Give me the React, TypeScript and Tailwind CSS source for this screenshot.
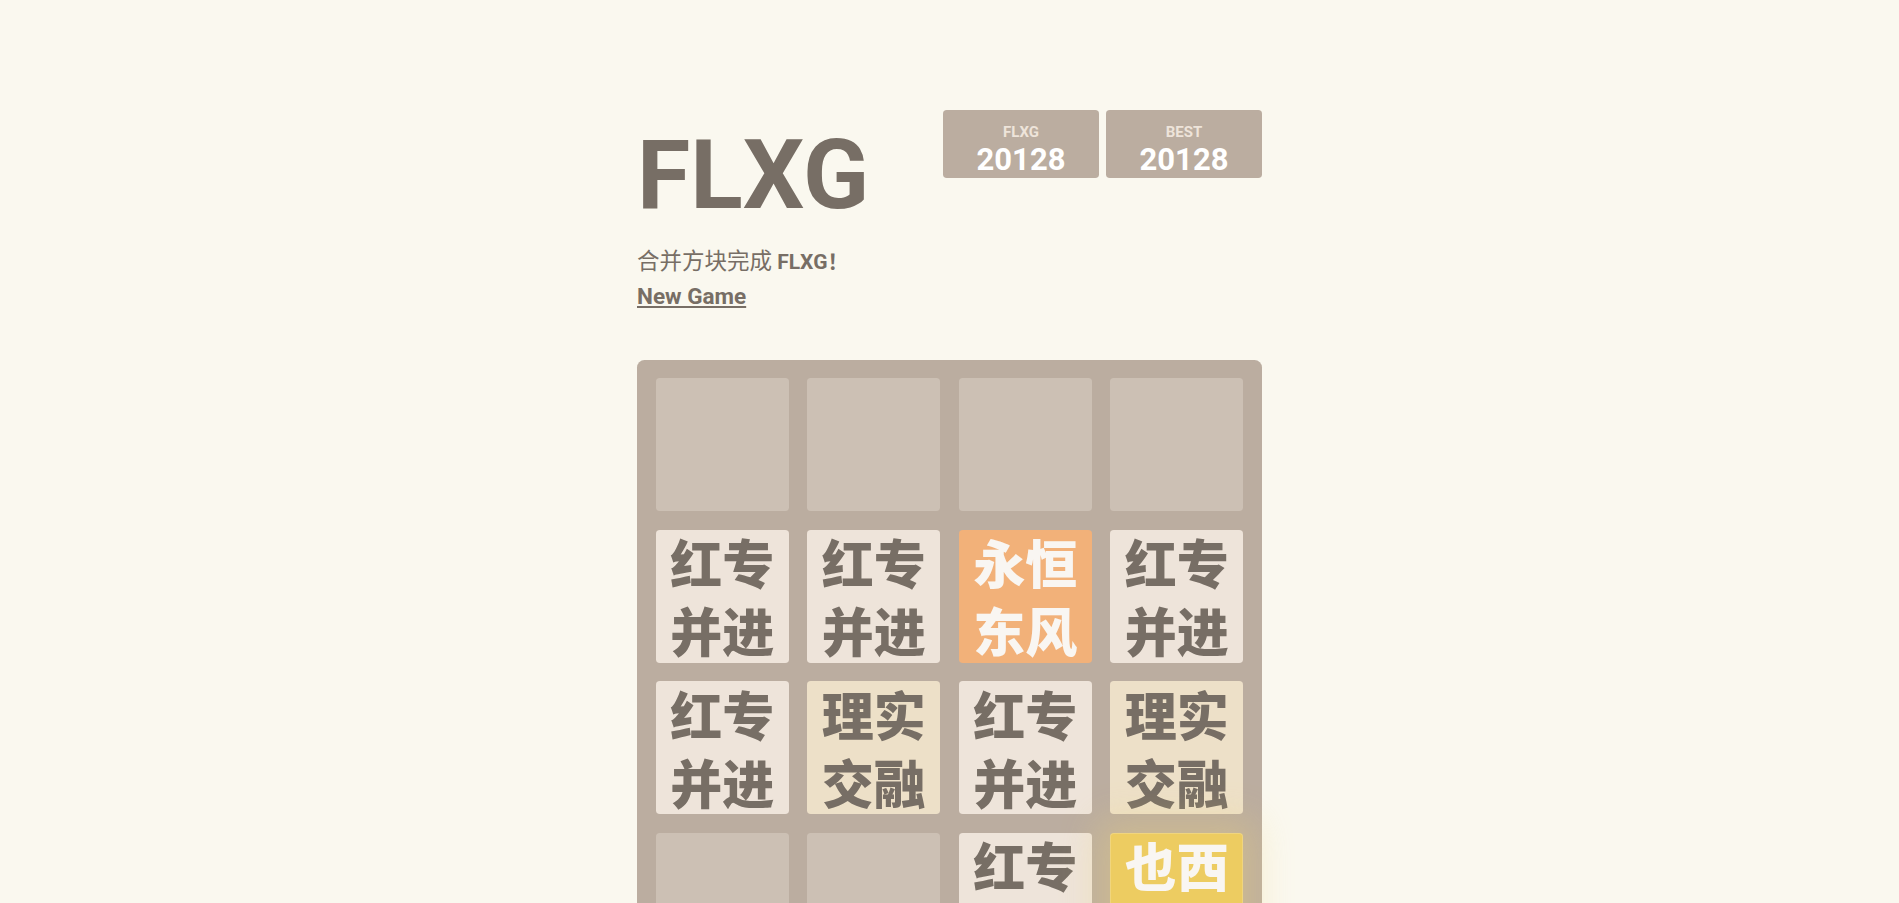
import React from "react";

type Tile = { text: string; kind: "empty" | "red" | "li" | "yong" | "ye" };

const rows: Tile[][] = [
  [
    { text: "", kind: "empty" },
    { text: "", kind: "empty" },
    { text: "", kind: "empty" },
    { text: "", kind: "empty" },
  ],
  [
    { text: "红专并进", kind: "red" },
    { text: "红专并进", kind: "red" },
    { text: "永恒东风", kind: "yong" },
    { text: "红专并进", kind: "red" },
  ],
  [
    { text: "红专并进", kind: "red" },
    { text: "理实交融", kind: "li" },
    { text: "红专并进", kind: "red" },
    { text: "理实交融", kind: "li" },
  ],
  [
    { text: "", kind: "empty" },
    { text: "", kind: "empty" },
    { text: "红专并进", kind: "red" },
    { text: "也西湖", kind: "ye" },
  ],
];

const tileClass: Record<Tile["kind"], string> = {
  empty: "bg-[rgba(238,228,218,0.35)]",
  red: "bg-[#eee4da] text-[#776e65]",
  li: "bg-[#ede0c8] text-[#776e65]",
  yong: "bg-[#f2b179] text-[#f9f6f2]",
  ye: "bg-[#edcc61] text-[#f9f6f2] shadow-[0_0_37.5px_12.5px_rgba(243,215,116,0.32),inset_0_0_0_1px_rgba(255,255,255,0.19)]",
};

const ScoreBox = ({ label, value }: { label: string; value: number }) => (
  <div className="flex flex-col items-center w-[156px] h-[68px] pt-[14px] bg-[#bbada0] rounded-[3.75px]">
    <span className="text-[15px] leading-[16px] font-bold uppercase text-[#eee4da]">{label}</span>
    <span className="mt-[1.5px] text-[31px] leading-[36px] font-bold text-white">{value}</span>
  </div>
);

const App = () => {
  return (
    <div className="min-h-screen bg-[#faf8ef] text-[#776e65] font-['Roboto','Noto_Sans_CJK_SC',sans-serif] pt-[100px] pb-[100px]">
      <div className="w-[625px] mx-auto">
        <div className="flex items-start justify-between">
          <h1 className="mt-[10px] text-[97px] leading-[130px] font-bold">FLXG</h1>
          <div className="flex gap-[7px] mt-[10px]">
            <ScoreBox label="FLXG" value={20128} />
            <ScoreBox label="Best" value={20128} />
          </div>
        </div>

        <p className="mt-[5px] text-[21px] leading-[32px]">
          <span className="text-[22.5px]">合并方块完成</span> <b>FLXG！</b>
        </p>
        <a className="block w-fit mt-[2px] text-[22.5px] leading-[32px] font-bold underline cursor-pointer">
          New Game
        </a>

        <div className="mt-[47.5px] grid grid-cols-4 gap-[18.75px] p-[18.75px] w-[625px] h-[625px] bg-[#bbada0] rounded-[7.5px]">
          {rows.flat().map((t, i) => (
            <div
              key={i}
              className={`flex items-center justify-center text-center h-[132.8px] rounded-[3.75px] font-black text-[52px] leading-[68px] font-['Noto_Sans_CJK_SC',sans-serif] ${tileClass[t.kind]}`}
            >
              {t.text}
            </div>
          ))}
        </div>
      </div>
    </div>
  );
};

export default App;
